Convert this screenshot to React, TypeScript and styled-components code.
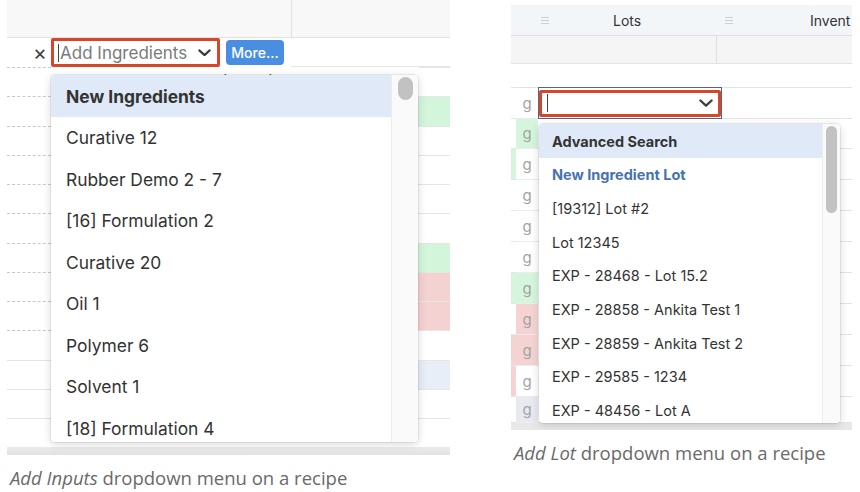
import React from "react";
import styled, { createGlobalStyle } from "styled-components";

const Global = createGlobalStyle`
  html, body { margin: 0; padding: 0; background: #ffffff; }
  body { font-family: Inter, "Noto Sans", sans-serif; }
`;

const Page = styled.div`
  display: flex;
  padding-left: 7px;
  gap: 61px;
  width: 860px;
  height: 492px;
  box-sizing: border-box;
  overflow: hidden;
`;

const Figure = styled.figure<{ $w: number; $top: number }>`
  margin: 0;
  padding-top: ${(p) => p.$top}px;
  width: ${(p) => p.$w}px;
  display: flex;
  flex-direction: column;
`;

const Caption = styled.figcaption`
  margin-top: 12px;
  padding-left: 3px;
  font-family: "Open Sans", "Liberation Sans", sans-serif;
  font-size: 18.5px;
  line-height: 22px;
  color: #6a6a6a;
  white-space: nowrap;
  em { font-style: italic; }
`;

const Shot = styled.div<{ $h: number }>`
  position: relative;
  height: ${(p) => p.$h}px;
  overflow: hidden;
  display: flex;
  flex-direction: column;
  background: #fff;
`;

/* ---------- Left figure ---------- */

const LHeader = styled.div`
  height: 38px;
  flex: none;
  display: flex;
  background: #f8f8f8;
  border-bottom: 1px solid #e2e2e2;
  box-sizing: border-box;
`;

const LHeaderCell = styled.div<{ $w?: number }>`
  width: ${(p) => (p.$w ? `${p.$w}px` : "auto")};
  flex: ${(p) => (p.$w ? "none" : "1")};
  border-right: ${(p) => (p.$w ? "1px solid #e2e2e2" : "none")};
`;

const EditRow = styled.div`
  height: 29px;
  flex: none;
  display: flex;
  align-items: center;
`;

const EditCell = styled.div`
  width: 284px;
  height: 100%;
  display: flex;
  align-items: center;
  padding-left: 26px;
  box-sizing: border-box;
`;

const Clear = styled.span`
  font-size: 21px;
  color: #444;
  width: 12px;
  margin-right: 6px;
  line-height: 1;
  margin-top: -1px;
`;

const Select = styled.div<{ $w: number; $h: number }>`
  width: ${(p) => p.$w}px;
  height: ${(p) => p.$h}px;
  box-sizing: border-box;
  border: 3px solid #d8462a;
  border-radius: 2px;
  display: flex;
  align-items: center;
  padding: 0 6px 0 4px;
  background: #fff;
`;

const Caret = styled.span`
  width: 1px;
  height: 18px;
  background: #444;
  margin-right: 1px;
  flex: none;
`;

const Placeholder = styled.span`
  flex: 1;
  font-size: 17px;
  color: #7a7a7a;
  white-space: nowrap;
`;

const MoreButton = styled.button`
  margin-left: 6px;
  width: 58px;
  height: 25px;
  border: none;
  border-radius: 4px;
  background: #4a8ee2;
  color: #fff;
  font-family: Inter, sans-serif;
  font-size: 14px;
  font-weight: 500;
  padding: 0;
`;

const EditRest = styled.div`
  flex: 1;
  height: 100%;
  border-bottom: 1px solid #e6e6e6;
  box-sizing: border-box;
`;

const LRow = styled.div`
  height: 29.25px;
  flex: none;
  display: flex;
`;

const LStub = styled.div<{ $dashed: boolean }>`
  width: 44px;
  flex: none;
  border-top: 1px ${(p) => (p.$dashed ? "dashed #c9c9c9" : "solid #e4e4e4")};
`;

const LMid = styled.div<{ $dashed: boolean }>`
  flex: 1;
  border-top: 1px solid ${(p) => (p.$dashed ? "transparent" : "#e4e4e4")};
  font-size: 15px;
  color: #555;
  padding: 3px 0 0 114px;
  white-space: nowrap;
  overflow: hidden;
`;

const LTint = styled.div<{ $bg: string }>`
  width: 32px;
  flex: none;
  background: ${(p) => p.$bg};
  border-top: 1px solid #e6e6e6;
`;

const BottomBar = styled.div`
  flex: 1;
  background: linear-gradient(#ebebeb, #e2e2e2);
`;

const Menu = styled.div<{ $l: number; $t: number; $w: number; $h: number }>`
  position: absolute;
  left: ${(p) => p.$l}px;
  top: ${(p) => p.$t}px;
  width: ${(p) => p.$w}px;
  height: ${(p) => p.$h}px;
  background: #fff;
  border-radius: 4px;
  box-shadow: 0 0 0 1px rgba(0, 0, 0, 0.06), 0 2px 8px rgba(0, 0, 0, 0.16);
  display: flex;
  overflow: hidden;
`;

const MenuList = styled.ul`
  list-style: none;
  margin: 0;
  padding: 0;
  flex: 1;
  overflow: hidden;
`;

const MenuItem = styled.li<{ $h: number; $fs: number; $pl: number; $kind?: "active" | "link" }>`
  height: ${(p) => p.$h}px;
  display: flex;
  align-items: center;
  padding-left: ${(p) => p.$pl}px;
  font-size: ${(p) => p.$fs}px;
  white-space: nowrap;
  color: ${(p) => (p.$kind === "link" ? "#4673b0" : "#333")};
  font-weight: ${(p) => (p.$kind ? 700 : 400)};
  background: ${(p) => (p.$kind === "active" ? "#dfe9f7" : "transparent")};
`;

const Track = styled.div<{ $w: number }>`
  width: ${(p) => p.$w}px;
  flex: none;
  border-left: 1px solid #ececec;
  background: #fafafa;
  display: flex;
  justify-content: center;
  padding-top: 2px;
  box-sizing: border-box;
`;

const Thumb = styled.div<{ $w: number; $h: number }>`
  width: ${(p) => p.$w}px;
  height: ${(p) => p.$h}px;
  border-radius: ${(p) => p.$w / 2}px;
  background: #c2c2c2;
`;

const Chevron = ({ w }: { w: number }) => (
  <svg width={w} height={w * 0.6} viewBox="0 0 12 7" style={{ flex: "none" }}>
    <path d="M1.2 1.2 L6 5.6 L10.8 1.2" fill="none" stroke="#3d3d3d" strokeWidth="2" strokeLinecap="round" strokeLinejoin="round" />
  </svg>
);

/* ---------- Right figure ---------- */

const RHeader = styled.div`
  height: 31px;
  flex: none;
  display: flex;
  align-items: center;
  background: #f3f6f9;
  border-bottom: 1px solid #dcdfe3;
  box-sizing: border-box;
`;

const RHeadCell = styled.div<{ $w: number; $pl: number; $gap: number }>`
  width: ${(p) => p.$w}px;
  flex: none;
  display: flex;
  align-items: center;
  padding-left: ${(p) => p.$pl}px;
  gap: ${(p) => p.$gap}px;
  box-sizing: border-box;
  font-size: 14px;
  color: #333;
  white-space: nowrap;
`;

const Burger = styled.span`
  width: 8px;
  height: 7px;
  flex: none;
  border-top: 1px solid #cfcfcf;
  border-bottom: 1px solid #cfcfcf;
  position: relative;
  box-sizing: border-box;
  &::after {
    content: "";
    position: absolute;
    left: 0;
    right: 0;
    top: 2px;
    height: 1px;
    background: #cfcfcf;
  }
`;

const RFilterRow = styled.div`
  height: 28px;
  flex: none;
  display: flex;
  background: #f5f5f5;
  border-bottom: 1px solid #e3e3e3;
  box-sizing: border-box;
`;

const RFilterCell = styled.div<{ $w?: number }>`
  width: ${(p) => (p.$w ? `${p.$w}px` : "auto")};
  flex: ${(p) => (p.$w ? "none" : "1")};
  border-right: ${(p) => (p.$w ? "1px solid #dedede" : "none")};
`;

const RBlankRow = styled.div`
  height: 24px;
  flex: none;
  border-bottom: 1px solid #e3e3e3;
  box-sizing: border-box;
`;

const RRow = styled.div<{ $h: number }>`
  height: ${(p) => p.$h}px;
  flex: none;
  display: flex;
`;

const RStrip = styled.div<{ $bg: string }>`
  width: 5px;
  background: ${(p) => p.$bg};
  border-bottom: 1px solid #e6e6e6;
`;

const GCell = styled.div<{ $bg: string }>`
  width: 22px;
  background: ${(p) => p.$bg};
  display: flex;
  align-items: center;
  justify-content: center;
  font-size: 15px;
  color: #a3a3a3;
  border-bottom: 1px solid #ececec;
  box-sizing: border-box;
`;

const RRest = styled.div`
  flex: 1;
  border-bottom: 1px solid #e3e3e3;
  box-sizing: border-box;
`;

const EditorFrame = styled.div`
  width: 184px;
  height: 32px;
  margin-top: -1px;
  flex: none;
  border: 1px solid #4d6a8e;
  box-sizing: border-box;
  display: flex;
  align-items: center;
  background: #fff;
`;

const RSelectInner = styled(Select)`
  padding: 0 5px 0 5px;
`;

const RBottom = styled.div`
  flex: 1;
  background: #e8e8e8;
`;

const leftItems = [
  "Curative 12",
  "Rubber Demo 2 - 7",
  "[16] Formulation 2",
  "Curative 20",
  "Oil 1",
  "Polymer 6",
  "Solvent 1",
  "[18] Formulation 4",
];

const leftRows: { dashed: boolean; bg: string; mid?: string }[] = [
  { dashed: true, bg: "#ffffff", mid: "⊙ Enter ingredient" },
  { dashed: true, bg: "#d3f6db" },
  { dashed: true, bg: "#ffffff" },
  { dashed: true, bg: "#ffffff" },
  { dashed: true, bg: "#ffffff" },
  { dashed: true, bg: "#ffffff" },
  { dashed: true, bg: "#d3f6db" },
  { dashed: true, bg: "#f5d2d2" },
  { dashed: true, bg: "#f5d2d2" },
  { dashed: true, bg: "#ffffff" },
  { dashed: false, bg: "#e8eef8" },
  { dashed: false, bg: "#ffffff" },
  { dashed: false, bg: "#ffffff" },
];

const rightItems = [
  "[19312] Lot #2",
  "Lot 12345",
  "EXP - 28468 - Lot 15.2",
  "EXP - 28858 - Ankita Test 1",
  "EXP - 28859 - Ankita Test 2",
  "EXP - 29585 - 1234",
  "EXP - 48456 - Lot A",
];

const rightRows: { strip: string; g: string; h: number }[] = [
  { strip: "#ffffff", g: "#ffffff", h: 31 },
  { strip: "#ffffff", g: "#d5f6dc", h: 30 },
  { strip: "#d5f6dc", g: "#ffffff", h: 31 },
  { strip: "#ffffff", g: "#ffffff", h: 31 },
  { strip: "#ffffff", g: "#ffffff", h: 31 },
  { strip: "#ffffff", g: "#ffffff", h: 31 },
  { strip: "#d5f6dc", g: "#d5f6dc", h: 31 },
  { strip: "#ffffff", g: "#f5d3d3", h: 31 },
  { strip: "#f5d3d3", g: "#f5d3d3", h: 31 },
  { strip: "#f5d3d3", g: "#ffffff", h: 31 },
  { strip: "#ffffff", g: "#e7ebf1", h: 26 },
];

export default function App() {
  return (
    <>
      <Global />
      <Page>
        <Figure $w={443} $top={0}>
          <Shot $h={455}>
            <LHeader>
              <LHeaderCell $w={284} />
              <LHeaderCell />
            </LHeader>
            <EditRow>
              <EditCell>
                <Clear>×</Clear>
                <Select $w={169} $h={29}>
                  <Caret />
                  <Placeholder>Add Ingredients</Placeholder>
                  <Chevron w={13} />
                </Select>
                <MoreButton>More...</MoreButton>
              </EditCell>
              <EditRest />
            </EditRow>
            {leftRows.map((r, i) => (
              <LRow key={i}>
                <LStub $dashed={r.dashed} />
                <LMid $dashed={r.dashed}>{r.mid}</LMid>
                <LTint $bg={r.bg} />
              </LRow>
            ))}
            <BottomBar />
            <Menu $l={44} $t={75} $w={367} $h={367}>
              <MenuList>
                <MenuItem $h={42} $fs={17.4} $pl={15} $kind="active">
                  New Ingredients
                </MenuItem>
                {leftItems.map((t) => (
                  <MenuItem key={t} $h={41.5} $fs={17.4} $pl={15}>
                    {t}
                  </MenuItem>
                ))}
              </MenuList>
              <Track $w={27}>
                <Thumb $w={15} $h={23} />
              </Track>
            </Menu>
          </Shot>
          <Caption>
            <em>Add Inputs</em> dropdown menu on a recipe
          </Caption>
        </Figure>

        <Figure $w={341} $top={5}>
          <Shot $h={425}>
            <RHeader>
              <RHeadCell $w={205} $pl={30} $gap={64}>
                <Burger />
                <span>Lots</span>
              </RHeadCell>
              <RHeadCell $w={136} $pl={9} $gap={77}>
                <Burger />
                <span>Invent</span>
              </RHeadCell>
            </RHeader>
            <RFilterRow>
              <RFilterCell $w={205} />
              <RFilterCell />
            </RFilterRow>
            <RBlankRow />
            {rightRows.map((r, i) => (
              <RRow key={i} $h={r.h}>
                <RStrip $bg={r.strip} />
                <GCell $bg={r.g}>g</GCell>
                {i === 0 ? (
                  <>
                    <EditorFrame>
                      <RSelectInner $w={184} $h={27}>
                        <Caret />
                        <Placeholder />
                        <Chevron w={14} />
                      </RSelectInner>
                    </EditorFrame>
                    <RRest />
                  </>
                ) : (
                  <RRest />
                )}
              </RRow>
            ))}
            <RBottom />
            <Menu $l={28} $t={119} $w={301} $h={299}>
              <MenuList>
                <MenuItem $h={34} $fs={14.5} $pl={13} $kind="active">
                  Advanced Search
                </MenuItem>
                <MenuItem $h={33.7} $fs={14.5} $pl={13} $kind="link">
                  New Ingredient Lot
                </MenuItem>
                {rightItems.map((t) => (
                  <MenuItem key={t} $h={33.7} $fs={14.5} $pl={13}>
                    {t}
                  </MenuItem>
                ))}
              </MenuList>
              <Track $w={18}>
                <Thumb $w={11} $h={87} />
              </Track>
            </Menu>
          </Shot>
          <Caption>
            <em>Add Lot</em> dropdown menu on a recipe
          </Caption>
        </Figure>
      </Page>
    </>
  );
}
